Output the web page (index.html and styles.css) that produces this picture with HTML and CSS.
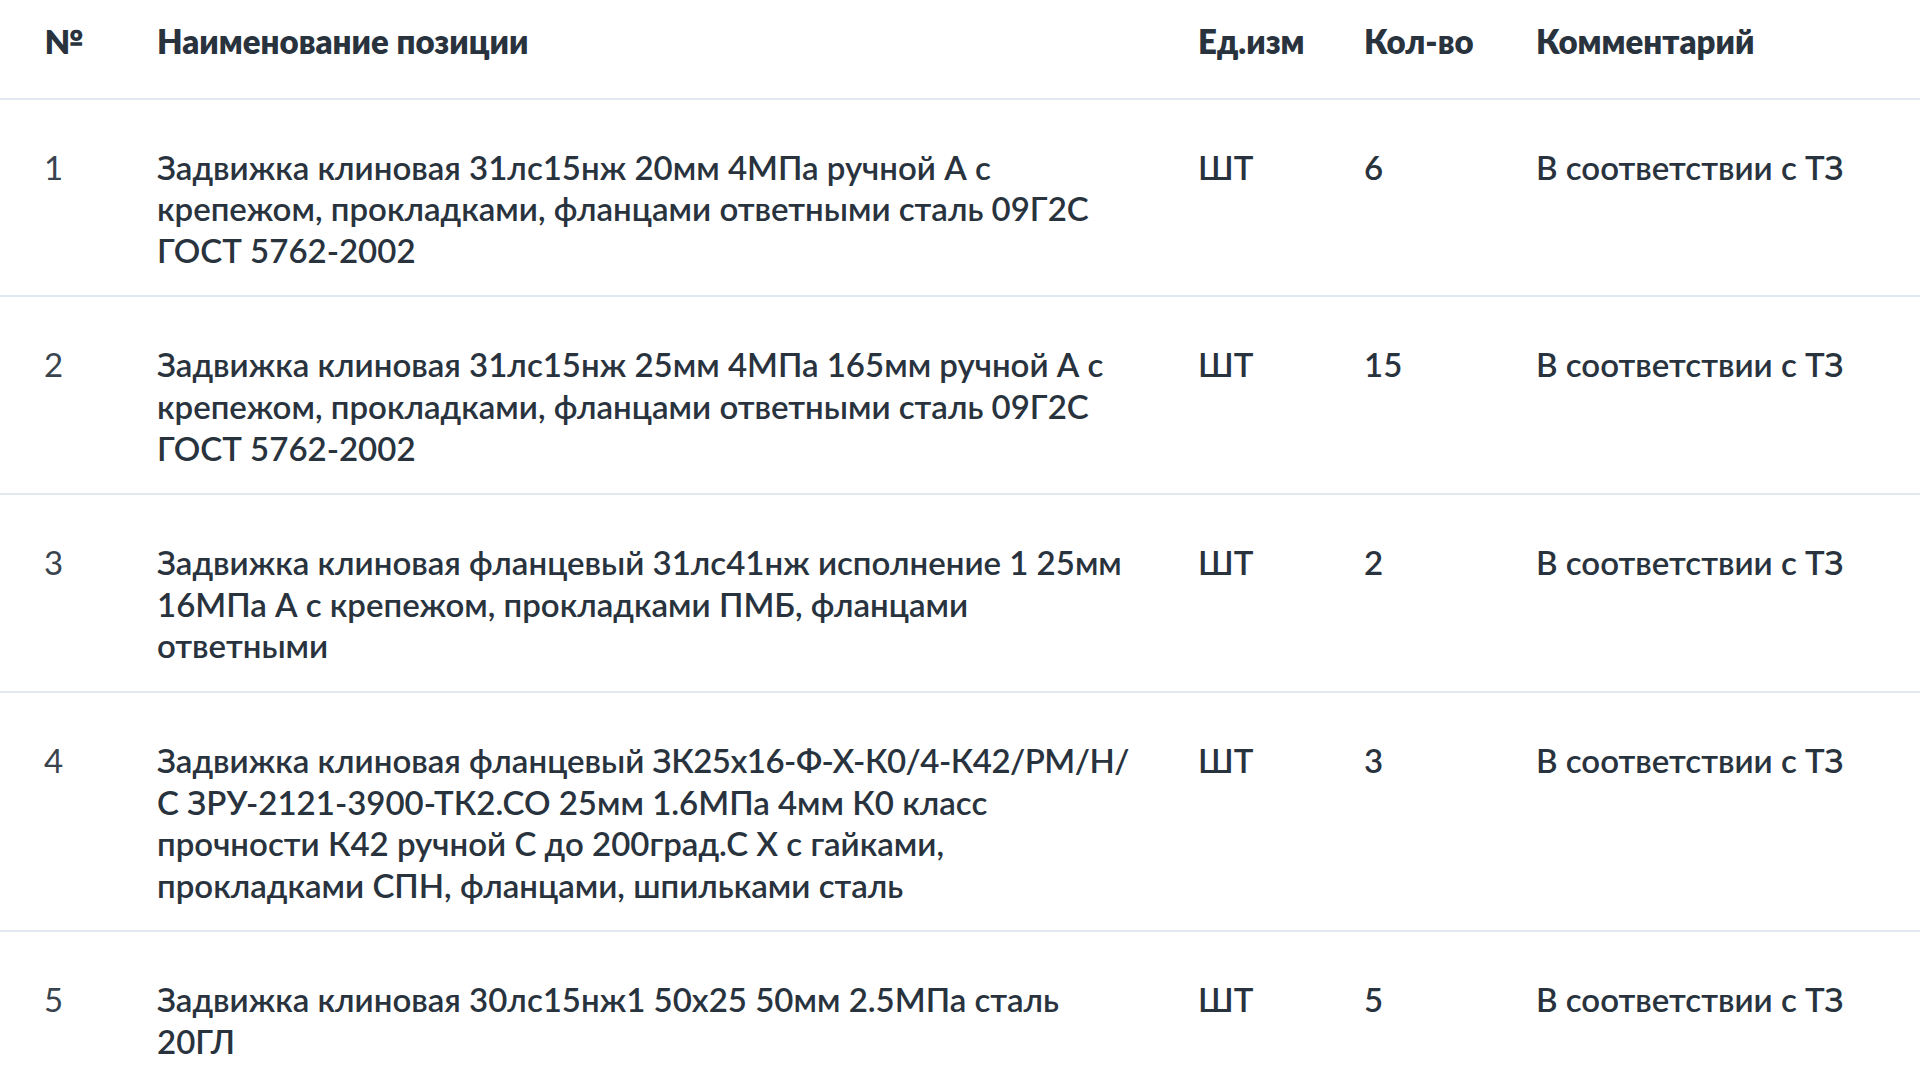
FILE: index.html
```html
<!DOCTYPE html>
<html lang="ru">
<head>
<meta charset="utf-8">
<title>Позиции</title>
<link rel="stylesheet" href="styles.css">
</head>
<body>
<div class="table">
  <div class="row head">
    <div class="cell num">№</div>
    <div class="cell name">Наименование позиции</div>
    <div class="cell">Ед.изм</div>
    <div class="cell">Кол-во</div>
    <div class="cell">Комментарий</div>
  </div>
  <div class="row">
    <div class="cell num">1</div>
    <div class="cell name">Задвижка клиновая 31лс15нж 20мм 4МПа ручной А с крепежом, прокладками, фланцами ответными сталь 09Г2С ГОСТ 5762-2002</div>
    <div class="cell">ШТ</div>
    <div class="cell">6</div>
    <div class="cell">В соответствии с ТЗ</div>
  </div>
  <div class="row">
    <div class="cell num">2</div>
    <div class="cell name">Задвижка клиновая 31лс15нж 25мм 4МПа 165мм ручной А с крепежом, прокладками, фланцами ответными сталь 09Г2С ГОСТ 5762-2002</div>
    <div class="cell">ШТ</div>
    <div class="cell">15</div>
    <div class="cell">В соответствии с ТЗ</div>
  </div>
  <div class="row">
    <div class="cell num">3</div>
    <div class="cell name">Задвижка клиновая фланцевый 31лс41нж исполнение 1 25мм 16МПа А с крепежом, прокладками ПМБ, фланцами ответными</div>
    <div class="cell">ШТ</div>
    <div class="cell">2</div>
    <div class="cell">В соответствии с ТЗ</div>
  </div>
  <div class="row">
    <div class="cell num">4</div>
    <div class="cell name">Задвижка клиновая фланцевый <span class="code">ЗК25х16-Ф-Х-К0/4-К42/РМ/Н/</span><wbr>С ЗРУ-2121-3900-ТК2.СО 25мм 1.6МПа 4мм К0 класс прочности К42 ручной С до 200град.С Х с гайками, прокладками СПН, фланцами, шпильками сталь</div>
    <div class="cell">ШТ</div>
    <div class="cell">3</div>
    <div class="cell">В соответствии с ТЗ</div>
  </div>
  <div class="row">
    <div class="cell num">5</div>
    <div class="cell name">Задвижка клиновая 30лс15нж1 50х25 50мм 2.5МПа сталь 20ГЛ</div>
    <div class="cell">ШТ</div>
    <div class="cell">5</div>
    <div class="cell">В соответствии с ТЗ</div>
  </div>
</div>
</body>
</html>
```
FILE: styles.css
```css
html, body {
  margin: 0;
  padding: 0;
  background: #ffffff;
}
body {
  font-family: Lato, "Open Sans", "Noto Sans", sans-serif;
  color: #29333e;
  overflow: hidden;
}
.table {
  width: 1920px;
}
.row {
  display: grid;
  grid-template-columns: 127px 1041px 166px 172px 1fr;
  border-bottom: 2px solid #e1e8ef;
  padding: 47px 0 24px;
  font-size: 33px;
  line-height: 41.6px;
  font-weight: 600;
}
.row.head {
  padding: 21px 0 35px;
  font-weight: 800;
}
.cell {
  padding: 0 30px;
  white-space: nowrap;
}
.cell.name {
  padding: 0 28px 0 30px;
  white-space: normal;
}
.code {
  white-space: nowrap;
  letter-spacing: -0.5px;
}
.cell.num {
  padding-left: 44px;
  padding-right: 0;
  font-weight: 400;
  color: #3a444f;
}
.head .cell.num {
  font-weight: 800;
  color: #29333e;
}
```
